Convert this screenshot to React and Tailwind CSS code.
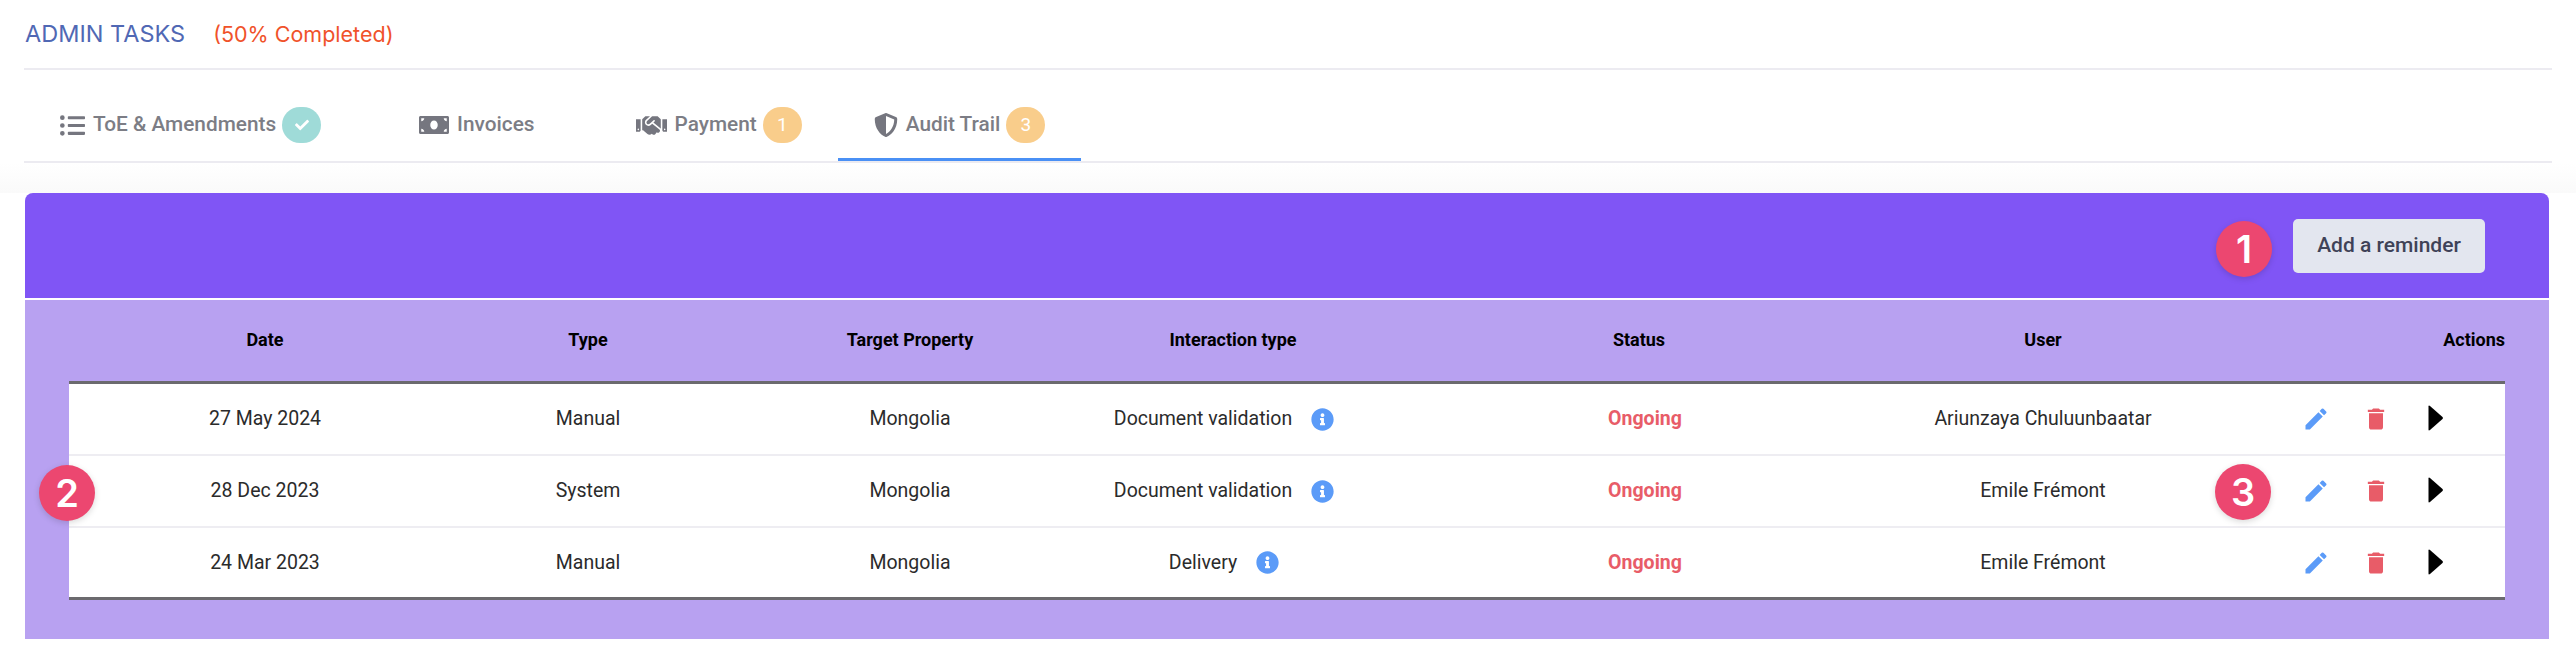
import React from "react";
import { FaListUl, FaMoneyBill, FaHandshake, FaShieldAlt, FaCheck, FaInfoCircle } from "react-icons/fa";
import { MdEdit, MdDelete } from "react-icons/md";

const roboto = "font-['Roboto',sans-serif]";
const cols = "grid grid-cols-[392px_254px_390px_256px_568px_228px_348px] items-center";

function Tab({ icon, label, badge, active, className = "" }) {
  return (
    <div className={`relative h-[91px] flex items-center pt-[19px] px-[36px] ${className}`}>
      <span className="flex items-center text-[#75767f]">{icon}</span>
      <span className="ml-[8px] text-[20.8px] font-medium text-[#7c7d85] whitespace-nowrap">{label}</span>
      {badge && (
        <span className={`ml-[6px] w-[39px] h-[36px] rounded-full flex items-center justify-center text-white text-[19px] ${badge === "check" ? "bg-[#9fdbd8]" : "bg-[#f9cd8b]"}`}>
          {badge === "check" ? <FaCheck size={14} /> : badge}
        </span>
      )}
      {active && <span className="absolute left-0 right-0 bottom-0 h-[3px] bg-[#4a90f5]" />}
    </div>
  );
}

function Marker({ n, className }) {
  return (
    <div className={`absolute w-[56px] h-[56px] rounded-full bg-[#ec4770] text-white flex items-center justify-center font-['Inter',sans-serif] font-semibold text-[38px] shadow-[0_2px_6px_rgba(0,0,0,0.15)] ${className}`}>
      {n}
    </div>
  );
}

const rows = [
  ["27 May 2024", "Manual", "Mongolia", "Document validation", "Ariunzaya Chuluunbaatar"],
  ["28 Dec 2023", "System", "Mongolia", "Document validation", "Emile Frémont"],
  ["24 Mar 2023", "Manual", "Mongolia", "Delivery", "Emile Frémont"],
];

export default function App() {
  return (
    <div className={`relative w-[2576px] h-[670px] bg-white overflow-hidden ${roboto}`}>
      <div className="mx-[24px] h-[70px] border-b-2 border-[#ecebf1] flex items-center pl-[1px] font-['Inter',sans-serif]">
        <span className="text-[#5068b4] text-[23.5px]">ADMIN TASKS</span>
        <span className="ml-[28px] text-[#f0522a] text-[21.5px]">(50% Completed)</span>
      </div>

      <div className="mx-[24px] h-[93px] border-b-2 border-[#ecebf1] flex">
        <Tab icon={<FaListUl size={25} />} label="ToE & Amendments" badge="check" />
        <Tab icon={<FaMoneyBill size={30} />} label="Invoices" className="ml-[26px]" />
        <Tab icon={<FaHandshake size={31} />} label="Payment" badge="1" className="ml-[29px]" />
        <Tab icon={<FaShieldAlt size={24} />} label="Audit Trail" badge="3" active />
      </div>

      <div className="h-[30px] bg-gradient-to-b from-white to-[#fafafa]" />

      <div className="ml-[25px] mr-[27px]">
        <div className="h-[105px] bg-[#8055f5] rounded-t-[8px] flex justify-end pt-[26px] pr-[64px]">
          <button className="w-[192px] h-[54px] rounded-[5px] bg-[#e3e6ef] text-[#3f4257] text-[21px] font-medium">
            Add a reminder
          </button>
        </div>
        <div className="h-[2px] bg-white" />
        <div className="h-[339px] bg-[#b8a1f1] pl-[44px] pr-[44px]">
          <div className={`${cols} h-[81px] pb-[3px] text-[18px] font-bold text-black text-center`}>
            <div>Date</div>
            <div>Type</div>
            <div>Target Property</div>
            <div>Interaction type</div>
            <div className="pr-[12px]">Status</div>
            <div>User</div>
            <div className="text-right">Actions</div>
          </div>
          <div className="bg-white border-y-[3px] border-[#6b6a6e] text-[19.5px] text-[#2b2b2b] text-center">
            {rows.map((r, i) => (
              <div key={i} className={`${cols} ${i < 2 ? "h-[72px] border-b-2 border-[#eeedf2]" : "h-[69px]"}`}>
                <div>{r[0]}</div>
                <div>{r[1]}</div>
                <div>{r[2]}</div>
                <div className="flex items-center justify-center pr-[18px]">
                  <span className="whitespace-nowrap">{r[3]}</span>
                  <FaInfoCircle size={23} className="ml-[19px] text-[#5b9bf8]" />
                </div>
                <div className="font-bold text-[#e85c68]">Ongoing</div>
                <div>{r[4]}</div>
                <div className="flex items-center justify-end gap-[32px] pr-[55px]">
                  <MdEdit size={28} className="text-[#5b9bf8]" />
                  <MdDelete size={28} className="text-[#e85c68]" />
                  <svg width="28" height="28" viewBox="0 0 28 28" className="-mt-[2px]">
                    <path d="M6.5 2.5 L6.5 25.5 Q6.5 27 8 26 L20.5 15 Q21.5 14 20.5 13 L8 2 Q6.5 1 6.5 2.5 Z" fill="#000" />
                  </svg>
                </div>
              </div>
            ))}
          </div>
        </div>
      </div>

      <Marker n="1" className="left-[2216px] top-[221px]" />
      <Marker n="2" className="left-[39px] top-[465px]" />
      <Marker n="3" className="left-[2215px] top-[464px]" />
    </div>
  );
}
